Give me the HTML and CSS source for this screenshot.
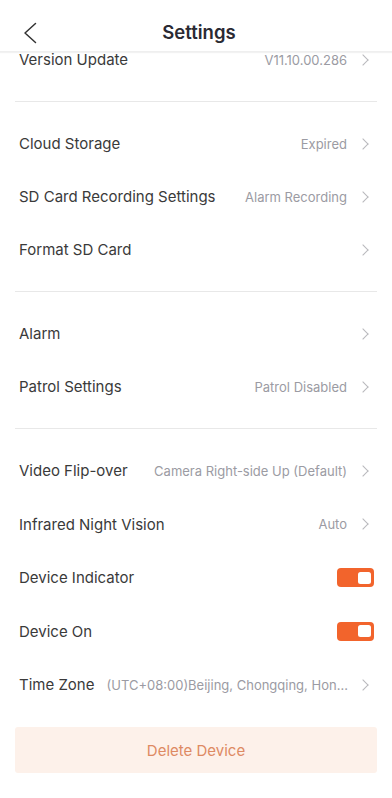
FILE: index.html
```html
<!DOCTYPE html>
<html lang="en">
<head>
<meta charset="utf-8">
<title>Settings</title>
<link rel="stylesheet" href="styles.css">
</head>
<body>
<div class="page">
  <header class="topbar">
    <svg class="back" width="14" height="22" viewBox="0 0 14 22"><path d="M12.5 1.5 L2 11 L12.5 20.5" fill="none" stroke="#333" stroke-width="1.5" stroke-linecap="round" stroke-linejoin="round"/></svg>
    <h1 class="title">Settings</h1>
  </header>
  <main class="content">
    <section class="group">
      <div class="row"><span class="label">Version Update</span><span class="value">V11.10.00.286</span><span class="chev"></span></div>
    </section>
    <section class="group">
      <div class="row"><span class="label">Cloud Storage</span><span class="value">Expired</span><span class="chev"></span></div>
      <div class="row"><span class="label">SD Card Recording Settings</span><span class="value">Alarm Recording</span><span class="chev"></span></div>
      <div class="row"><span class="label">Format SD Card</span><span class="value"></span><span class="chev"></span></div>
    </section>
    <section class="group">
      <div class="row"><span class="label">Alarm</span><span class="value"></span><span class="chev"></span></div>
      <div class="row"><span class="label">Patrol Settings</span><span class="value">Patrol Disabled</span><span class="chev"></span></div>
    </section>
    <section class="group last">
      <div class="row"><span class="label">Video Flip-over</span><span class="value">Camera Right-side Up (Default)</span><span class="chev"></span></div>
      <div class="row"><span class="label">Infrared Night Vision</span><span class="value">Auto</span><span class="chev"></span></div>
      <div class="row"><span class="label">Device Indicator</span><span class="value"></span><span class="toggle"><span class="knob"></span></span></div>
      <div class="row"><span class="label">Device On</span><span class="value"></span><span class="toggle"><span class="knob"></span></span></div>
      <div class="row"><span class="label">Time Zone</span><span class="value">(UTC+08:00)Beijing, Chongqing, Hon...</span><span class="chev"></span></div>
    </section>
    <button class="delete">Delete Device</button>
  </main>
</div>
</body>
</html>
```
FILE: styles.css
```css
* { box-sizing: border-box; }
html, body {
  margin: 0;
  padding: 0;
  background: #ffffff;
}
body {
  font-family: Inter, "Liberation Sans", Arial, sans-serif;
  color: #333;
  width: 392px;
  height: 798px;
  overflow: hidden;
}
.page {
  display: flex;
  flex-direction: column;
}
.topbar {
  position: relative;
  z-index: 2;
  height: 52px;
  background: #fff;
  display: flex;
  align-items: center;
  justify-content: center;
  box-shadow: 0 1px 1px rgba(0,0,0,0.05);
  border-bottom: 1px solid #efefef;
}
.back {
  position: absolute;
  left: 23px;
  top: 22px;
}
.title {
  margin: 0 0 0 6px;
  font-size: 18.5px;
  font-weight: 600;
  color: #2a2a33;
  padding-top: 13px;
}
.content {
  position: relative;
  z-index: 1;
  margin-top: -19px;
  display: flex;
  flex-direction: column;
}
.group {
  margin: 0 15px;
  padding: 15px 0;
  border-bottom: 1px solid #e8e8e8;
  display: flex;
  flex-direction: column;
}
.group:first-child { padding-top: 0; }
.group.last { border-bottom: none; padding-bottom: 15.5px; }
.row {
  height: 53px;
  display: flex;
  align-items: center;
  padding: 0 4px;
}
.group.last .row { height: 53.5px; }
.label {
  font-size: 15px;
  color: #3a3a3a;
  white-space: nowrap;
  flex: none;
}
.value {
  flex: 1;
  min-width: 0;
  text-align: right;
  font-size: 13px;
  color: #9b9ba3;
  white-space: nowrap;
  overflow: hidden;
  margin-left: 12px;
  padding-right: 14px;
}
.chev {
  flex: none;
  width: 8px;
  height: 14px;
  margin-right: 4px;
  position: relative;
}
.chev::after {
  content: "";
  position: absolute;
  left: -2px;
  top: 3px;
  width: 7px;
  height: 7px;
  border-top: 1.2px solid #b8b8bc;
  border-right: 1.2px solid #b8b8bc;
  transform: rotate(45deg);
}
.toggle {
  flex: none;
  width: 37px;
  height: 19px;
  border-radius: 4px;
  background: #f2642c;
  display: flex;
  align-items: center;
  justify-content: flex-end;
  padding-right: 3px;
  margin-right: -1px;
}
.knob {
  width: 13px;
  height: 12px;
  background: #fff;
  border-radius: 2.5px;
}
.delete {
  margin: 0 15px;
  height: 46px;
  border: none;
  border-radius: 3px;
  background: #fdf1ea;
  color: #de8a63;
  font-family: Inter, "Liberation Sans", Arial, sans-serif;
  font-size: 15px;
}
```
